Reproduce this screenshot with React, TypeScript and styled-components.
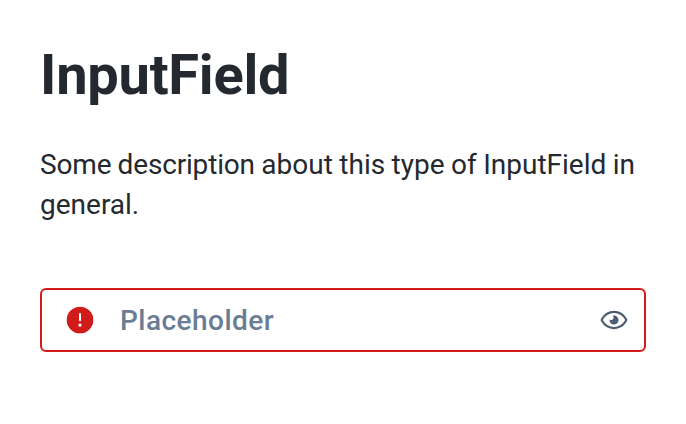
import React from "react";
import styled, { createGlobalStyle } from "styled-components";

const GlobalStyle = createGlobalStyle`
  body {
    margin: 0;
    background: #ffffff;
    font-family: Roboto, sans-serif;
    color: #242930;
  }
`;

const Page = styled.main`
  box-sizing: border-box;
  height: 424px;
  padding: 41px 40px 40px;
`;

const Title = styled.h1`
  margin: 0 0 36px;
  font-size: 56px;
  line-height: 68px;
  font-weight: 700;
  letter-spacing: -0.25px;
`;

const Description = styled.p`
  margin: 0 0 63px;
  font-size: 28px;
  line-height: 40px;
  font-weight: 400;
  word-spacing: -0.5px;
`;

const Tight = styled.span`
  letter-spacing: -0.17px;
`;

const Field = styled.label`
  box-sizing: border-box;
  display: flex;
  align-items: center;
  height: 64px;
  padding: 0 14px 0 22px;
  border: 2px solid #d11a1a;
  border-radius: 6px;
`;

const Input = styled.input`
  flex: 1;
  min-width: 0;
  margin: 0 8px 0 24px;
  padding: 2px 0 0;
  border: 0;
  outline: 0;
  background: transparent;
  font: 500 28px/40px Roboto, sans-serif;
  letter-spacing: 0.47px;
  color: #242930;

  &::placeholder {
    color: #697d95;
    opacity: 1;
  }
`;

const Icon = styled.svg`
  display: block;
  flex: none;
  width: 32px;
  height: 32px;
`;

const RevealButton = styled.button`
  padding: 0;
  border: 0;
  background: none;
  color: #4b5c70;
`;

export default function App() {
  return (
    <>
      <GlobalStyle />
      <Page>
        <Title>InputField</Title>
        <Description>
          <Tight>Some description</Tight> about this type of InputField in general.
        </Description>
        <Field>
          <Icon viewBox="0 0 32 32" aria-hidden="true">
            <circle cx="16" cy="16" r="13.3" fill="#d11a1a" />
            <path d="M16 10v6.3" stroke="#fff" strokeWidth="2" strokeLinecap="round" />
            <circle cx="16" cy="21.1" r="1.7" fill="#fff" />
          </Icon>
          <Input type="text" placeholder="Placeholder" />
          <RevealButton type="button" aria-label="Show value">
            <Icon viewBox="0 0 32 32" fill="none">
              <path
                d="M4 16.8Q3.5 16 4 15.2C6.7 10.6 11 7.9 16 7.9S25.3 10.6 28 15.2Q28.5 16 28 16.8C25.3 21.4 21 24.1 16 24.1S6.7 21.4 4 16.8Z"
                stroke="currentColor"
                strokeWidth="2.2"
                strokeLinejoin="round"
              />
              <path
                d="M16 11.6a4.5 4.5 0 1 1-4.4 3.6a2.2 2.2 0 0 0 3.9-.9C15.8 13.2 15 12.5 14.8 11.8Q15.4 11.6 16 11.6Z"
                fill="currentColor"
              />
            </Icon>
          </RevealButton>
        </Field>
      </Page>
    </>
  );
}
